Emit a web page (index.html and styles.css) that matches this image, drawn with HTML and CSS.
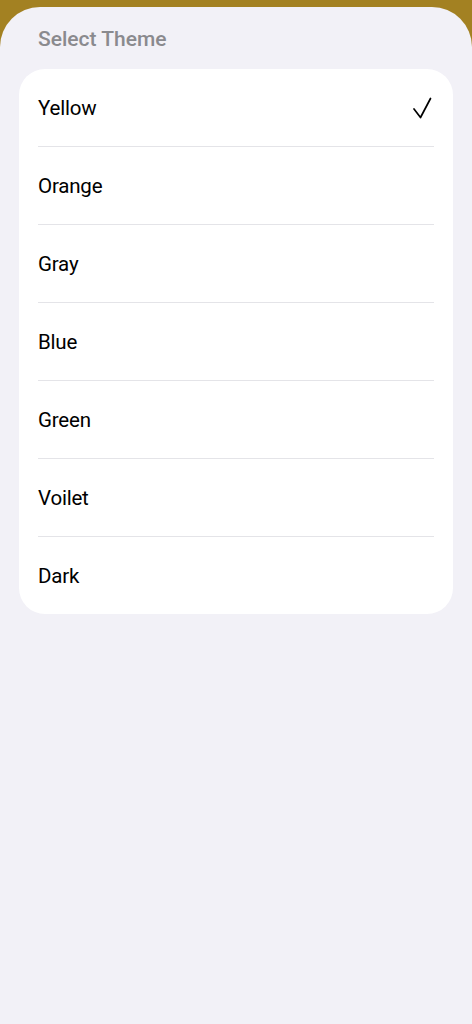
FILE: index.html
```html
<!DOCTYPE html>
<html lang="en">
<head>
    <meta charset="UTF-8">
    <meta name="viewport" content="width=device-width, initial-scale=1.0">
    <title>Select Theme</title>
    <link rel="stylesheet" href="styles.css">
</head>
<body>
    <div class="sheet">
        <h2 class="sheet-title">Select Theme</h2>
        <div class="theme-list">
            <div class="theme-row">
                <span>Yellow</span>
                <svg class="check" width="20" height="22" viewBox="0 0 20 22">
                    <path d="M2 12 L8.5 20.5 L18.5 1.5" fill="none" stroke="#000" stroke-width="1.7" stroke-linecap="round" stroke-linejoin="round"/>
                </svg>
            </div>
            <div class="theme-row"><span>Orange</span></div>
            <div class="theme-row"><span>Gray</span></div>
            <div class="theme-row"><span>Blue</span></div>
            <div class="theme-row"><span>Green</span></div>
            <div class="theme-row"><span>Voilet</span></div>
            <div class="theme-row"><span>Dark</span></div>
        </div>
    </div>
</body>
</html>
```

FILE: styles.css
```css
    body{
        margin: 0;
        background-color: #a38122;
        font-family: Roboto, "Liberation Sans", sans-serif;
        height: 1024px;
        overflow: hidden;
    }
    .sheet{
        margin-top: 7px;
        height: 1017px;
        background-color: #f2f1f7;
        border-radius: 40px 40px 0 0;
        padding: 0 19px;
        box-sizing: border-box;
    }
    .sheet-title{
        margin: 0;
        padding: 19px 0 0 19px;
        height: 43px;
        font-size: 21px;
        font-weight: 500;
        color: #8a8a8e;
        line-height: 26px;
    }
    .theme-list{
        background-color: #fff;
        border-radius: 26px;
        padding: 0 19px;
    }
    .theme-row{
        height: 77px;
        display: flex;
        align-items: center;
        justify-content: space-between;
        font-size: 20.5px;
        letter-spacing: -0.2px;
        color: #000;
        border-bottom: 1px solid #e4e4e8;
    }
    .theme-row:last-child{
        border-bottom: none;
    }
    .check{
        margin-right: 2px;
    }
```
